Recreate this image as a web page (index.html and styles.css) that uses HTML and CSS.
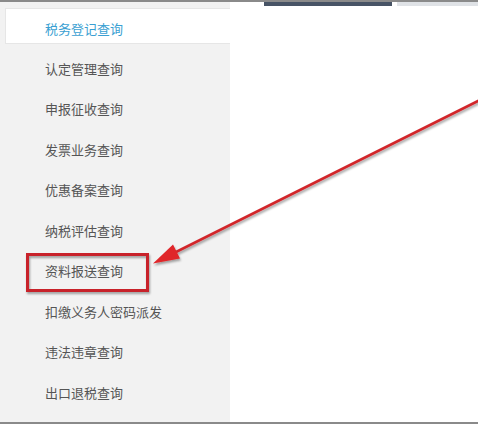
FILE: index.html
```html
<!DOCTYPE html>
<html lang="zh-CN">
<head>
    <meta charset="UTF-8">
    <meta name="viewport" content="width=device-width, initial-scale=1.0">
    <title>查询</title>
    <link rel="stylesheet" href="styles.css">
</head>
<body>

<div class="page">
    <ul class="sidebar">
        <li class="item active">税务登记查询</li>
        <li class="item">认定管理查询</li>
        <li class="item">申报征收查询</li>
        <li class="item">发票业务查询</li>
        <li class="item">优惠备案查询</li>
        <li class="item">纳税评估查询</li>
        <li class="item">资料报送查询</li>
        <li class="item">扣缴义务人密码派发</li>
        <li class="item">违法违章查询</li>
        <li class="item">出口退税查询</li>
    </ul>
    <div class="content">
        <div class="tabs">
            <div class="tab tab-dark"></div>
            <div class="tab tab-light"></div>
        </div>
    </div>

    <!-- annotation drawn over the screenshot -->
    <svg class="annotation" width="478" height="424" viewBox="0 0 478 424">
        <defs>
            <filter id="shadow" x="-10%" y="-10%" width="120%" height="130%">
                <feDropShadow dx="1" dy="2" stdDeviation="1.2" flood-color="#000" flood-opacity="0.35"/>
            </filter>
        </defs>
        <g filter="url(#shadow)">
            <rect x="27.5" y="254.5" width="120" height="36" fill="none" stroke="#c8242a" stroke-width="3"/>
            <line x1="480" y1="100" x2="170" y2="255" stroke="#d1262b" stroke-width="2.6"/>
            <polygon points="153,263.5 180,258.5 173,244.5" fill="#e0262a"/>
        </g>
    </svg>
</div>

</body>
</html>
```

FILE: styles.css
```css
* {
    margin: 0;
    padding: 0;
    box-sizing: border-box;
}
body {
    font-family: "Noto Sans CJK SC", "Noto Sans", sans-serif;
    background-color: #fff;
    color: #555;
}
.page {
    position: relative;
    width: 478px;
    height: 424px;
    display: flex;
    border-top: 2px solid #8a8a8a;
    border-bottom: 2px solid #8a8a8a;
    overflow: hidden;
}
.sidebar {
    list-style: none;
    width: 230px;
    background-color: #f2f2f2;
    padding: 6px 0 0 5px;
}
.item {
    height: 40.5px;
    line-height: 40.5px;
    padding-left: 40px;
    font-size: 13px;
    color: #555;
    white-space: nowrap;
}
.item.active {
    height: 36px;
    line-height: 40px;
    margin-bottom: 4.5px;
    background-color: #fff;
    border: 1px solid #e6e6e6;
    border-right: none;
    padding-left: 39px;
    color: #3a9fd2;
}
.content {
    flex: 1;
    background-color: #fff;
}
.tabs {
    display: flex;
    gap: 5px;
    margin-top: -2px;
    padding-left: 34px;
}
.tab {
    height: 6px;
}
.tab-dark {
    width: 128px;
    background-color: #475365;
}
.tab-light {
    flex: 1;
    background-color: #dfe2e6;
}
.annotation {
    position: absolute;
    left: 0;
    top: -2px;
    pointer-events: none;
}
```
